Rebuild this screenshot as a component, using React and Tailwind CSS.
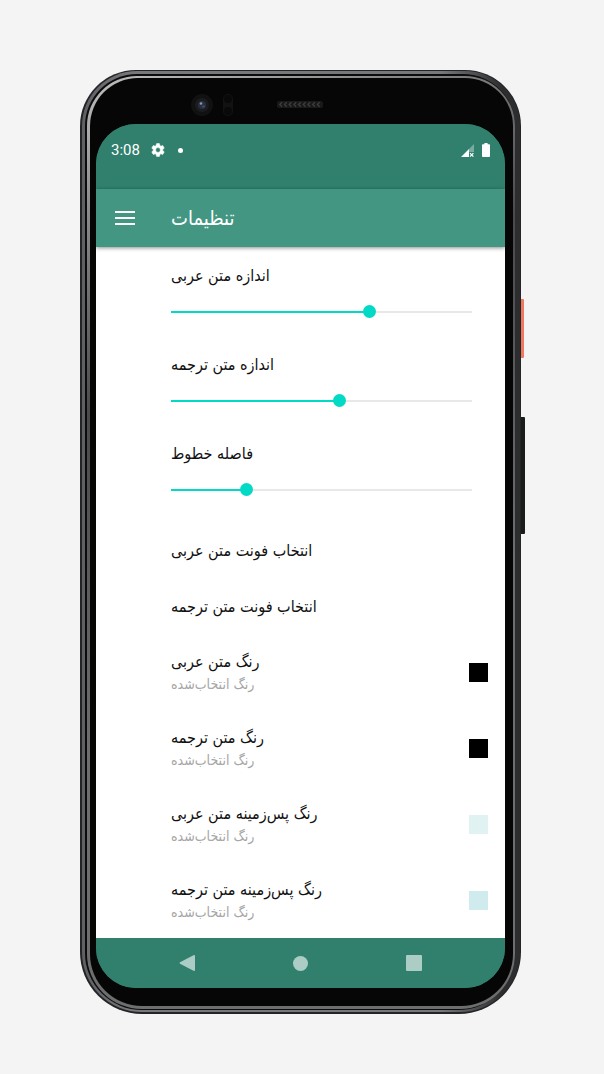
import { useState } from 'react';

const initialSliders = [
  { id: 'arabic-size', label: 'اندازه متن عربی', value: 66 },
  { id: 'translation-size', label: 'اندازه متن ترجمه', value: 56 },
  { id: 'line-spacing', label: 'فاصله خطوط', value: 25 },
];

const fonts = ['انتخاب فونت متن عربی', 'انتخاب فونت متن ترجمه'];

const colors = [
  { label: 'رنگ متن عربی', swatch: 'bg-black' },
  { label: 'رنگ متن ترجمه', swatch: 'bg-black' },
  { label: 'رنگ پس‌زمینه متن عربی', swatch: 'bg-[#e0f2f1]' },
  { label: 'رنگ پس‌زمینه متن ترجمه', swatch: 'bg-[#d0ebee]' },
];

const StatusBar = () => (
  <div className="flex h-[65px] items-start justify-between bg-[#30806d] px-[15px] pt-4 text-white">
    <div className="flex h-5 items-center">
      <span className="font-[Roboto] text-[15px] leading-5">3:08</span>
      <svg className="ml-[10px] h-4 w-4" viewBox="0 0 24 24" fill="currentColor" stroke="currentColor" strokeWidth="0.8">
        <path d="M19.14 12.94c.04-.3.06-.61.06-.94 0-.32-.02-.64-.07-.94l2.03-1.58a.49.49 0 0 0 .12-.61l-1.92-3.32a.488.488 0 0 0-.59-.22l-2.39.96c-.5-.38-1.03-.7-1.62-.94l-.36-2.54a.484.484 0 0 0-.48-.41h-3.84c-.24 0-.43.17-.47.41l-.36 2.54c-.59.24-1.13.57-1.62.94l-2.39-.96c-.22-.08-.47 0-.59.22L2.74 8.87c-.12.21-.08.47.12.61l2.03 1.58c-.05.3-.09.63-.09.94s.02.64.07.94l-2.03 1.58a.49.49 0 0 0-.12.61l1.92 3.32c.12.22.37.29.59.22l2.39-.96c.5.38 1.03.7 1.62.94l.36 2.54c.05.24.24.41.48.41h3.84c.24 0 .44-.17.47-.41l.36-2.54c.59-.24 1.13-.56 1.62-.94l2.39.96c.22.08.47 0 .59-.22l1.92-3.32c.12-.22.07-.47-.12-.61l-2.01-1.58zM12 15.6A3.6 3.6 0 1 1 12 8.4a3.6 3.6 0 0 1 0 7.2z" />
      </svg>
      <span className="ml-3 h-[5px] w-[5px] rounded-full bg-white" />
    </div>
    <div className="flex h-5 items-center gap-2">
      <svg className="h-[13px] w-[13px]" viewBox="0 0 13 13" fill="currentColor">
        <path d="M13 0v8H8V5z" opacity=".35" />
        <path d="M0 13 8 5v8z" />
        <path d="m9 9.2 3.4 3.4m0-3.4L9 12.6" stroke="currentColor" strokeWidth="1.2" />
      </svg>
      <svg className="h-[14px] w-2" viewBox="0 0 8 14" fill="currentColor">
        <path d="M2.4 0h3.2v1.2H7.2q.8 0 .8.8v11q0 1-.8 1H.8q-.8 0-.8-1V2q0-.8.8-.8h1.6z" />
      </svg>
    </div>
  </div>
);

const AppBar = () => (
  <header className="relative flex h-[58px] items-center bg-[#439682] pl-[19px] text-white shadow-[0_1px_4px_rgba(0,0,0,0.45)]">
    <button type="button" aria-label="منو" className="flex w-5 flex-col gap-1">
      <span className="h-[2px] w-full bg-white" />
      <span className="h-[2px] w-full bg-white" />
      <span className="h-[2px] w-full bg-white" />
    </button>
    <h1 className="ml-9 text-xl leading-7">تنظیمات</h1>
  </header>
);

const SliderRow = ({ id, label, value, onChange }) => (
  <div className="flex h-[89px] flex-col pr-[33px] pl-[75px]">
    <label htmlFor={id} className="mt-[17px] text-base leading-6">{label}</label>
    <div className="relative mt-[17px] flex h-[13px] items-center">
      <div className="h-[2px] w-full bg-[#e8e8e8]">
        <div className="h-full bg-[#03dac5]" style={{ width: `${value}%` }} />
      </div>
      {/* Widened by half a thumb on each side so the thumb centre follows the track */}
      <input
        id={id}
        type="range"
        min="0"
        max="100"
        value={value}
        onChange={(e) => onChange(Number(e.target.value))}
        className="absolute inset-y-0 -left-[6px] w-[calc(100%+12px)] appearance-none bg-transparent [&::-webkit-slider-thumb]:h-[13px] [&::-webkit-slider-thumb]:w-[13px] [&::-webkit-slider-thumb]:appearance-none [&::-webkit-slider-thumb]:rounded-full [&::-webkit-slider-thumb]:bg-[#03dac5]"
      />
    </div>
  </div>
);

const ColorRow = ({ label, swatch }) => (
  <button type="button" className="flex h-[76px] w-full items-center justify-between pr-[17px] pl-[75px] text-left">
    <span className="flex flex-col">
      <span className="text-base leading-6">{label}</span>
      <span className="text-sm leading-5 text-[#a6a6a6]">رنگ انتخاب‌شده</span>
    </span>
    <span className={`h-[19px] w-[19px] ${swatch}`} />
  </button>
);

const NavBar = () => (
  <nav className="flex h-[50px] items-center justify-between bg-[#30806d] px-[83px] text-[#accdc5]">
    <button type="button" aria-label="Back">
      <svg className="h-4 w-4" viewBox="0 0 16 16" fill="currentColor">
        <path d="M15 0q1 0 1 1v14q0 1-1 1L1 8.8q-1-.8 0-1.6z" />
      </svg>
    </button>
    <button type="button" aria-label="Home" className="h-[15px] w-[15px] rounded-full bg-[#accdc5]" />
    <button type="button" aria-label="Recent apps" className="h-4 w-4 rounded-[1px] bg-[#accdc5]" />
  </nav>
);

const Earpiece = () => (
  <div className="flex h-[46px] items-start pt-[15px] pl-[94px]">
    <svg className="h-6 w-[136px]" viewBox="0 0 136 24" fill="none">
      <circle cx="12" cy="12" r="11" fill="#111112" />
      <circle cx="12" cy="12" r="7" fill="#1b1c1f" />
      <circle cx="12" cy="12" r="4" fill="#27303d" />
      <circle cx="11" cy="10.5" r="1.3" fill="#8d96a5" />
      <circle cx="13.5" cy="13.5" r="1.3" fill="#3f4a78" />
      <rect x="33" y="1" width="10" height="22" rx="5" fill="#121213" />
      <circle cx="38" cy="6" r="4" fill="#09090a" />
      <circle cx="38" cy="18" r="4" fill="#09090a" />
      <rect x="87" y="8" width="46" height="7" rx="2" fill="#19191a" />
      {[0, 1, 2, 3, 4, 5, 6, 7, 8].map((i) => (
        <path key={i} d={`M${92 + i * 4.7} 9.2l-2.2 2.3 2.2 2.3`} stroke="#3c3c3d" strokeWidth="1.4" />
      ))}
    </svg>
  </div>
);

const App = () => {
  const [sliders, setSliders] = useState(initialSliders);

  const updateSlider = (id, value) => {
    setSliders(sliders.map((s) => (s.id === id ? { ...s, value } : s)));
  };

  return (
    <div className="min-h-screen bg-[#f4f4f4] pt-[70px] pr-[83px] pb-[60px] pl-20 font-['DejaVu_Sans_Condensed','DejaVu_Sans',sans-serif] text-[#111]">
      <div className="relative">
        {/* Side keys */}
        <span className="absolute top-[229px] -right-[3px] h-[59px] w-2 rounded-[1px] bg-[#ef7862]" />
        <span className="absolute top-[347px] -right-[4px] h-[117px] w-2 rounded-[1px] bg-[#1a1b1b]" />

        {/* Metal frame, from the outer edge inwards */}
        <div className="relative rounded-t-[56px] rounded-b-[62px] bg-[#242426] pt-[1px] pr-[1px] pb-[2px] pl-[2px]">
          <div className="rounded-t-[55px] rounded-b-[60px] bg-[linear-gradient(to_right,#5e6064,#77787b_12%,#77787b_82%,#2c2d2f_96%)] pt-[3px] pr-[5px] pb-[2px] pl-[3px]">
            <div className="rounded-t-[52px] rounded-b-[57px] bg-[#0c0c0d] pt-[2px] pb-[1px] pl-[2px]">
              <div className="rounded-t-[50px] rounded-b-[55px] bg-[linear-gradient(155deg,#c0c0c0,#8a8a8a_12%,#4a4a4a_30%,#6d6e6e_60%,#6d6e6e)] pt-[2px] pr-[2px] pb-[3px] pl-[3px]">
                <div className="rounded-t-[48px] rounded-b-[52px] bg-[#060607] pr-2 pb-[18px] pl-[6px]">
                  <Earpiece />
                  <div className="overflow-hidden rounded-[40px] bg-[#30806d]">
                    <StatusBar />
                    <AppBar />
                    <main className="bg-white">
                      {sliders.map((s) => (
                        <SliderRow key={s.id} {...s} onChange={(value) => updateSlider(s.id, value)} />
                      ))}
                      <div className="pt-2">
                        {fonts.map((label) => (
                          <button key={label} type="button" className="block h-14 w-full pt-[2px] pl-[75px] text-left text-base leading-6">
                            {label}
                          </button>
                        ))}
                      </div>
                      {colors.map((c) => (
                        <ColorRow key={c.label} {...c} />
                      ))}
                    </main>
                    <NavBar />
                  </div>
                </div>
              </div>
            </div>
          </div>
        </div>
      </div>
    </div>
  );
};

export default App;
